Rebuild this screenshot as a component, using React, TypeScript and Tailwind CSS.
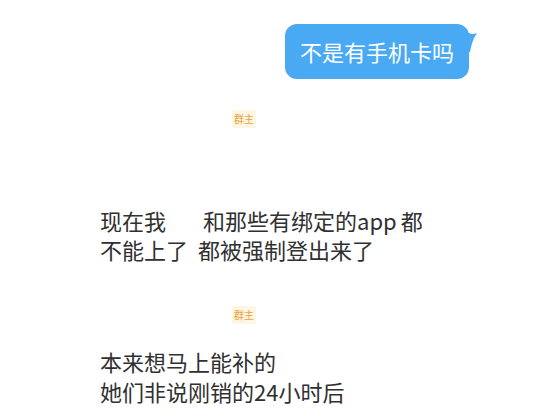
const font = { fontFamily: '"Noto Sans CJK SC", "Noto Sans", sans-serif' }

function OwnerBadge() {
  return (
    <div className="flex pl-[232px]">
      <span className="rounded-[2px] bg-[#fdf6e2] px-[2px] py-[2px] text-[10px] leading-[14px] text-[#e9a23b]">
        群主
      </span>
    </div>
  )
}

function Bubble({ text }: { text: string }) {
  return (
    <div className="flex justify-end pr-[86px]">
      <div className="relative flex h-[55px] w-[184px] items-center rounded-[12px] bg-[#4aa9f3] pl-[15px] text-[22px] text-white">
        {text}
        <svg
          className="absolute right-[-9px] top-[6px]"
          width="12"
          height="22"
          viewBox="0 0 12 22"
        >
          <path d="M0 0 Q4 6 11 3 Q6 10 4 22 L0 22 Z" fill="#4aa9f3" />
        </svg>
      </div>
    </div>
  )
}

export default function App() {
  return (
    <div className="h-[416px] w-[555px] overflow-hidden bg-white text-[#303030]" style={font}>
      <div className="pt-[24px]">
        <Bubble text="不是有手机卡吗" />
      </div>

      <div className="pt-[31px]">
        <OwnerBadge />
        <div className="pl-[100px] pt-[78px] text-[22px] leading-[29px]">
          <div>
            现在我<span className="inline-block w-[37px]" />和那些有绑定的app<span className="inline-block w-[4px]" />都
          </div>
          <div>
            不能上了<span className="inline-block w-[10px]" />都被强制登出来了
          </div>
        </div>
      </div>

      <div className="pt-[42px]">
        <OwnerBadge />
        <div className="pl-[100px] pt-[22px] text-[22px] leading-[30px]">
          <div>本来想马上能补的</div>
          <div>她们非说刚销的24小时后</div>
        </div>
      </div>
    </div>
  )
}
